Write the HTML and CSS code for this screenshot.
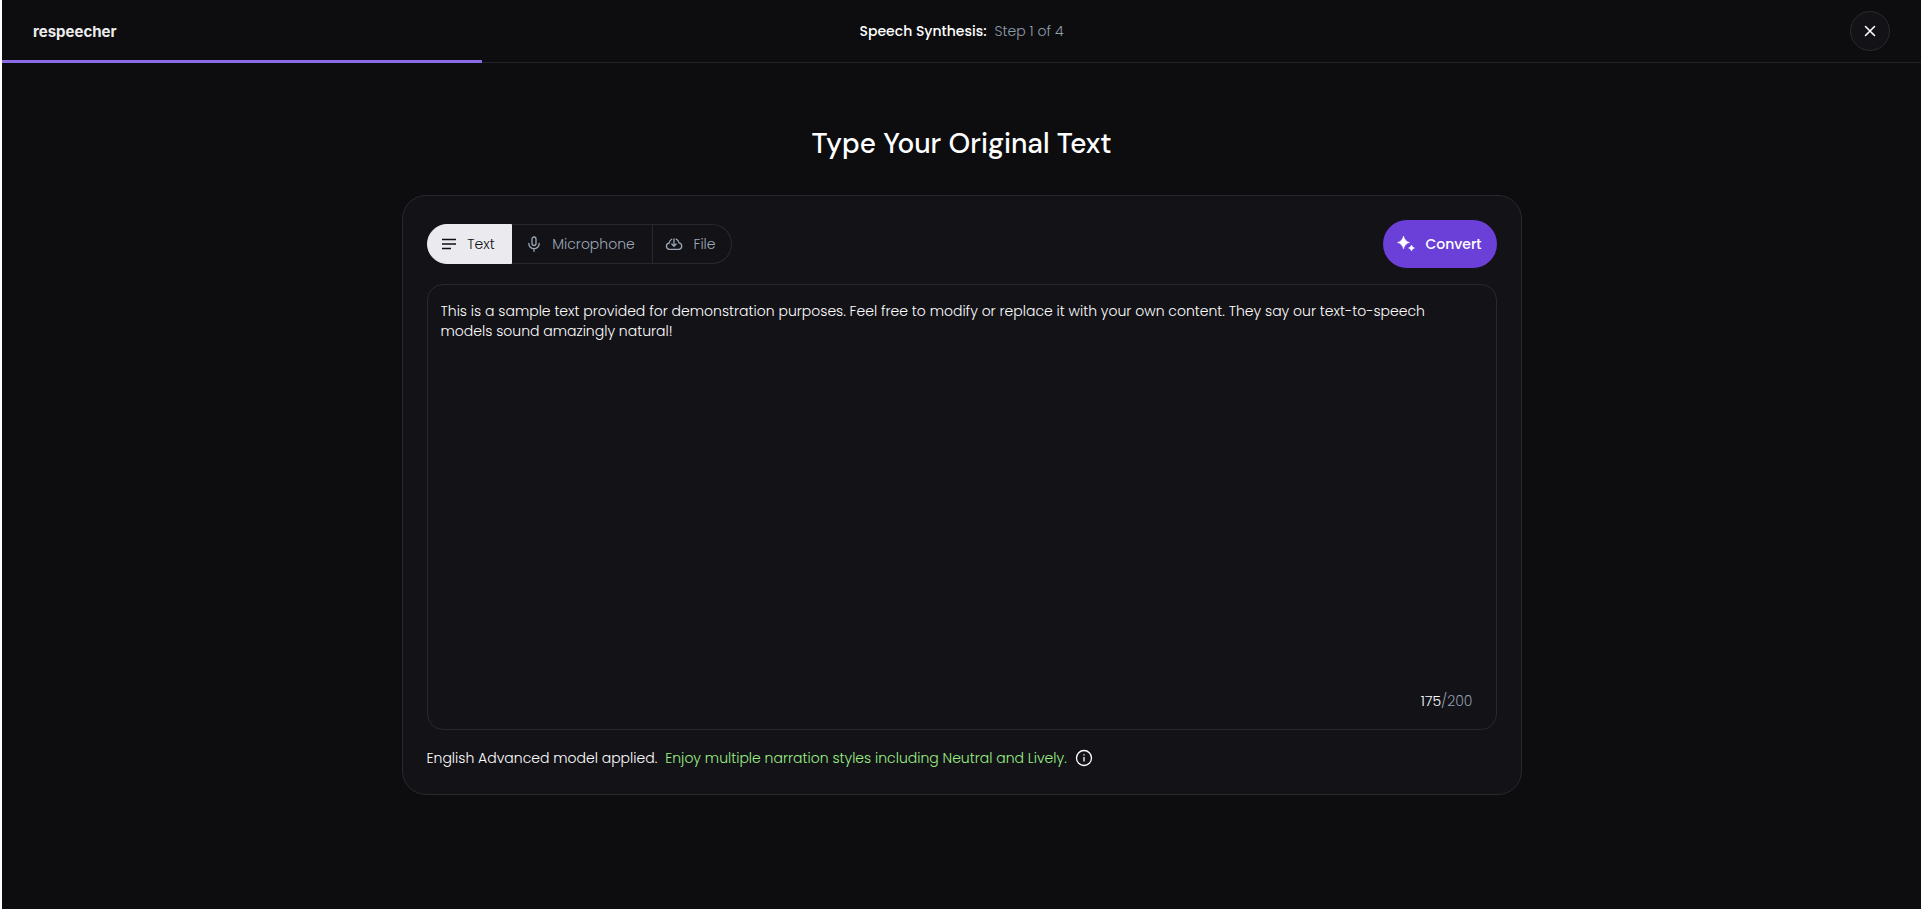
FILE: index.html
```html
<!DOCTYPE html>
<html lang="en">
<head>
<meta charset="utf-8">
<meta name="viewport" content="width=device-width, initial-scale=1">
<title>Speech Synthesis</title>
<link rel="stylesheet" href="styles.css">
</head>
<body>
<div class="app">
  <header class="topbar">
    <a class="logo" href="#">respeecher</a>
    <p class="step"><strong class="step-name">Speech Synthesis:</strong><span>Step 1 of 4</span></p>
    <button class="close" type="button" aria-label="Close">
      <svg width="12" height="12" viewBox="0 0 12 12" fill="none" stroke="currentColor" stroke-width="1.6" stroke-linecap="round"><path d="M1.500 1.500l9 9M10.500 1.500l-9 9"/></svg>
    </button>
    <div class="progress"></div>
  </header>
  <main class="main">
    <h1 class="title">Type Your Original Text</h1>
    <section class="card">
      <div class="toolbar">
        <div class="tabs">
          <button class="tab tab-text" type="button">
            <svg width="16" height="16" viewBox="0 0 16 16" fill="none" stroke="currentColor" stroke-width="1.400"><path d="M1 3.500h14M1 8h14M1 12.500h9"/></svg>
            Text
          </button>
          <button class="tab tab-mic" type="button">
            <svg width="16" height="16" viewBox="0 0 16 16" fill="none" stroke="currentColor" stroke-width="1.3" stroke-linecap="round"><rect x="6" y="1" width="4" height="8.500" rx="2"/><path d="M2.800 7.500a5.200 5.200 0 0 0 10.400 0M8 12.700v2.600"/></svg>
            Microphone
          </button>
          <button class="tab tab-file" type="button">
            <svg width="18" height="16" viewBox="0 0 18 16" fill="none" stroke="currentColor" stroke-width="1.300" stroke-linecap="round" stroke-linejoin="round"><path d="M6.800 3.200A5 5 0 0 0 4.200 7 3.200 3.200 0 0 0 4 13.300H14A3.300 3.300 0 0 0 14 6.800 5 5 0 0 0 11.200 3.200M9 3v7M6.800 8L9 10.200 11.200 8"/></svg>
            File
          </button>
        </div>
        <button class="convert" type="button">
          <svg width="18" height="18" viewBox="0 0 18 18" fill="currentColor"><path d="M6.500 1Q7.700 6.300 12.500 7.500 7.700 8.700 6.500 14 5.300 8.700.5 7.500 5.300 6.300 6.500 1zM14.500 10Q15.100 12.400 17.500 13 15.100 13.600 14.500 16 13.900 13.600 11.500 13 13.900 12.400 14.500 10z" stroke="currentColor" stroke-width=".5"/></svg>
          Convert
        </button>
      </div>
      <div class="editor">
        <textarea class="input" aria-label="Original text" spellcheck="false">This is a sample text provided for demonstration purposes. Feel free to modify or replace it with your own content. They say our text-to-speech models sound amazingly natural!</textarea>
        <p class="count"><span class="count-used">175</span>/200</p>
      </div>
      <footer class="note">
        <span>English Advanced model applied.</span>
        <span class="note-tip">Enjoy multiple narration styles including Neutral and Lively.</span>
        <button class="info" type="button" aria-label="More information">
          <svg width="18" height="18" viewBox="0 0 18 18" fill="none" stroke="currentColor" stroke-width="1.3"><circle cx="9" cy="9" r="7.500"/><path d="M9 8v4.500M9 5.300v1.300"/></svg>
        </button>
      </footer>
    </section>
  </main>
</div>
</body>
</html>
```
FILE: styles.css
```css
* { box-sizing: border-box; }

body {
  margin: 0;
  background: #0d0d0f;
  color: #fff;
  font: 300 14px/20px Poppins, Inter, sans-serif;
}

button {
  font: inherit;
  color: inherit;
  background: none;
  border: 0;
  padding: 0;
  cursor: pointer;
}

p, h1 { margin: 0; }
svg { display: block; flex: none; }

.app {
  min-height: 100vh;
  border-left: 2px solid #fff;
}

.topbar {
  position: relative;
  display: grid;
  grid-template-columns: 1fr auto 1fr;
  align-items: center;
  height: 63px;
  padding: 0 31px;
  border-bottom: 1px solid #232326;
}

.logo {
  padding-top: 2px;
  color: #ececec;
  font: 700 15px/20px Inter, sans-serif;
  text-decoration: none;
}

.step {
  display: flex;
  gap: 8px;
  color: #909eae;
}

.step-name {
  color: #fff;
  font-weight: 500;
}

.close {
  justify-self: end;
  display: grid;
  place-items: center;
  width: 40px;
  height: 40px;
  background: #131217;
  border: 1px solid #2b2b2f;
  border-radius: 50%;
}

.progress {
  position: absolute;
  left: 0;
  bottom: -1px;
  width: 25%;
  height: 3px;
  background: #8c6be8;
}

.main {
  display: flex;
  flex-direction: column;
  align-items: center;
  gap: 31px;
  padding: 61px 24px 48px;
}

.title {
  font: 500 28px/40px "DM Sans", Inter, sans-serif;
}

.card {
  display: flex;
  flex-direction: column;
  gap: 16px;
  width: 100%;
  max-width: 1120px;
  padding: 24px;
  background: #131217;
  border: 1px solid #29292d;
  border-radius: 24px;
}

.toolbar {
  display: flex;
  align-items: center;
  justify-content: space-between;
}

.tabs { display: flex; }

.tab {
  display: flex;
  align-items: center;
  justify-content: center;
  height: 40px;
  gap: 10px;
  padding-right: 2px;
  color: #9ca8b7;
  border: 1px solid #29292d;
}

.tab-text {
  width: 85px;
  background: #ebebef;
  border-color: #ebebef;
  color: #101014;
  border-radius: 20px 0 0 20px;
}

.tab-mic {
  width: 141px;
  border-left: 0;
}

.tab-file {
  width: 79px;
  border-left: 0;
  border-radius: 0 20px 20px 0;
}

.convert {
  display: flex;
  align-items: center;
  justify-content: center;
  gap: 10px;
  width: 114px;
  height: 48px;
  background: #6b40d8;
  border-radius: 24px;
  font-weight: 500;
}

.editor {
  display: flex;
  flex-direction: column;
  height: 446px;
  padding: 16px 23px 18px 13px;
  border: 1px solid #29292d;
  border-radius: 16px;
}

.input {
  flex: 1;
  padding: 0;
  background: none;
  border: 0;
  outline: 0;
  resize: none;
  color: #fff;
  font: inherit;
}

.count {
  align-self: flex-end;
  color: #909eae;
}

.count-used { color: #fff; }

.note {
  display: flex;
  align-items: center;
  gap: 8px;
  min-height: 24px;
}

.note-tip { color: #9bf087; }
```
